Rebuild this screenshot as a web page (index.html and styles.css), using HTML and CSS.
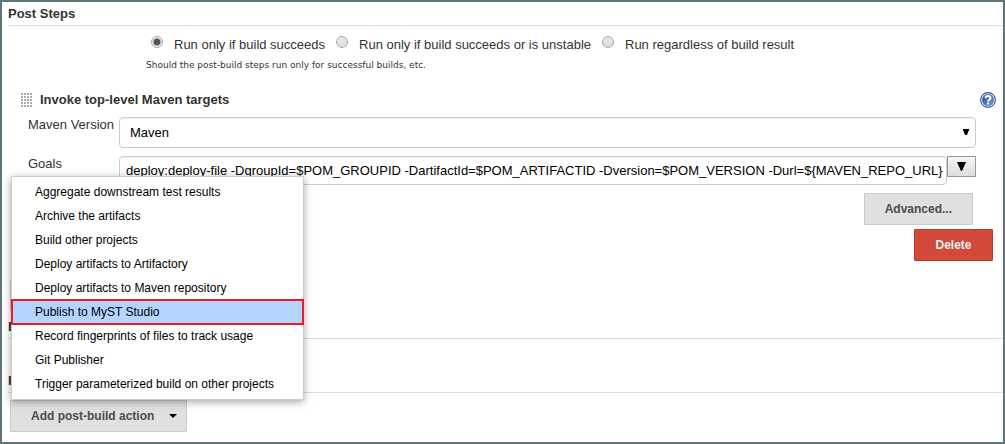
FILE: index.html
```html
<!DOCTYPE html>
<html lang="en">
<head>
<meta charset="utf-8">
<title>Job configuration</title>
<link rel="stylesheet" href="styles.css">
</head>
<body>
<form class="config">
  <h2 class="section-title">Post Steps</h2>
  <fieldset class="run-when">
    <label class="choice"><input type="radio" name="run" checked><span>Run only if build succeeds</span></label>
    <label class="choice"><input type="radio" name="run"><span>Run only if build succeeds or is unstable</span></label>
    <label class="choice"><input type="radio" name="run"><span>Run regardless of build result</span></label>
  </fieldset>
  <p class="hint">Should the post-build steps run only for successful builds, etc.</p>

  <div class="step">
    <div class="step-head">
      <span class="grip"></span>
      <h3 class="step-title">Invoke top-level Maven targets</h3>
      <a class="help" href="#help" aria-label="Help">
        <svg viewBox="0 0 16 16" width="16" height="16">
          <defs><linearGradient id="blue" x1="0" y1="0" x2="1" y2="1"><stop offset="0" stop-color="#1f4791"/><stop offset="1" stop-color="#7fa3d2"/></linearGradient></defs>
          <circle cx="8" cy="8" r="7.4" fill="#fff" stroke="#2f5593" stroke-width="1.1"/>
          <circle cx="8" cy="8" r="5.7" fill="url(#blue)" stroke="#3a609f" stroke-width=".6"/>
          <path d="M5.5 6.2C5.7 3.4 10.5 3.4 10.5 6.1C10.5 7.7 8.1 7.7 8.1 9.6" fill="none" stroke="#fff" stroke-width="2"/>
          <rect x="7" y="10.5" width="2.1" height="1.9" fill="#fff"/>
        </svg>
      </a>
    </div>
    <div class="field">
      <label class="field-label" for="version">Maven Version</label>
      <div class="select-box">
        <select class="select" id="version"><option>Maven</option></select>
        <svg class="select-arrow" viewBox="0 0 6 6" width="6" height="6"><path d="M0 0H6V1L4 6H2L0 1Z"/></svg>
      </div>
    </div>
    <div class="field">
      <label class="field-label" for="goals">Goals</label>
      <input class="text" id="goals" type="text" value="deploy:deploy-file -DgroupId=$POM_GROUPID -DartifactId=$POM_ARTIFACTID -Dversion=$POM_VERSION -Durl=${MAVEN_REPO_URL}">
      <button class="expand" type="button" aria-label="Expand"><svg viewBox="0 0 9 9" width="9" height="9"><path d="M0 0H9L5 9H4Z"/></svg></button>
    </div>
    <div class="actions">
      <button class="button advanced" type="button">Advanced...</button>
      <button class="button danger" type="button">Delete</button>
    </div>
  </div>

  <button class="button add add-step" type="button" aria-label="Add post-build step"><span class="caret"></span></button>
  <h2 class="section-title settings">Build Settings</h2>
  <h2 class="section-title post-actions">Post-build Actions</h2>
  <div class="dropdown">
    <button class="button add" type="button">Add post-build action<span class="caret"></span></button>
    <ul class="menu">
      <li><button class="item" type="button">Aggregate downstream test results</button></li>
      <li><button class="item" type="button">Archive the artifacts</button></li>
      <li><button class="item" type="button">Build other projects</button></li>
      <li><button class="item" type="button">Deploy artifacts to Artifactory</button></li>
      <li><button class="item" type="button">Deploy artifacts to Maven repository</button></li>
      <li><button class="item selected" type="button">Publish to MyST Studio</button></li>
      <li><button class="item" type="button">Record fingerprints of files to track usage</button></li>
      <li><button class="item" type="button">Git Publisher</button></li>
      <li><button class="item" type="button">Trigger parameterized build on other projects</button></li>
    </ul>
  </div>
</form>
</body>
</html>
```
FILE: styles.css
```css
* { box-sizing: border-box; }
body {
  margin: 0;
  background: #fff;
  color: #333;
  font: 13px/16px "Liberation Sans", Arial, sans-serif;
}
button, input, select { font: inherit; margin: 0; }
.config {
  min-height: 100vh;
  padding: 4px 0 10px 6px;
  border: 2px solid #60747c;
}
.section-title {
  margin: 0;
  padding-bottom: 3px;
  border-bottom: 1px solid #ddd;
  font-size: 13px;
  line-height: 16px;
  font-weight: bold;
}
.run-when {
  display: flex;
  gap: 11px;
  margin: 0;
  padding: 10px 0 0 143px;
  border: 0;
}
.choice { display: flex; gap: 11px; line-height: 18px; }
.choice input {
  appearance: none;
  width: 12px;
  height: 12px;
  flex: none;
  border: 1px solid #aaa;
  border-radius: 50%;
  background: linear-gradient(#e8e8e8, #dcdcdc);
}
.choice input:checked {
  background: radial-gradient(circle, #555 0 3px, #e8e8e8 4px);
}
.hint {
  margin: 5px 0 0 138px;
  font-family: "DejaVu Sans", Verdana, sans-serif;
  font-size: 9px;
  line-height: 12px;
}
.step { padding: 20px 7px 0 13px; }
.step-head { display: flex; align-items: center; height: 18px; }
.grip {
  width: 12px;
  height: 15px;
  background: radial-gradient(circle at 1px 1px, #aaa 1px, transparent 1px) 0 0 / 3px 3px;
}
.step-title { flex: 1; margin: 0 0 0 7px; font-size: 13px; line-height: 16px; }
.help { width: 16px; height: 16px; }
.help svg { display: block; }
.field {
  display: flex;
  align-items: flex-start;
  padding: 0 20px 0 7px;
  margin-top: 8px;
}
.field-label { flex: none; width: 91px; }
.select-box { position: relative; flex: 1; }
.select, .text {
  width: 100%;
  border: 1px solid #ccc;
  border-radius: 4px;
  background: #fff;
  box-shadow: inset 0 1px 1px #eee;
  color: #000;
}
.select { appearance: none; display: block; height: 31px; padding: 0 10px; }
.select-arrow { position: absolute; right: 7px; top: 12px; }
.text { flex: 1; min-width: 0; height: 29px; padding: 0 3px 0 6px; }
.expand {
  display: flex;
  justify-content: center;
  width: 29px;
  height: 21px;
  padding: 5px 0 0;
  border: 1px solid #999;
  background: linear-gradient(#f5f5f5, #ddd);
}
.actions { display: flex; flex-direction: column; align-items: flex-end; gap: 4px; padding-top: 8px; }
.button {
  height: 32px;
  padding: 0 20px;
  border: 1px solid #ccc;
  border-radius: 1px;
  background: #e0e0e0;
  color: #4d4d4d;
  font-size: 12px;
  font-weight: bold;
}
.advanced { margin-right: 23px; }
.danger { min-width: 79px; margin-right: 3px; background: #d24939; border-color: #b83a2b; color: #eee; }
.add { display: flex; align-items: center; margin: 18px 0 0 2px; padding-right: 9px; }
.add-step { justify-content: flex-end; width: 177px; }
.caret {
  margin-left: 15px;
  border: 4px solid transparent;
  border-top-color: #000;
  border-bottom: 0;
}
.settings { margin-top: 8px; }
.post-actions { margin-top: 34px; }
.dropdown { position: relative; width: max-content; }
.dropdown .add { margin-top: 7px; }
.menu {
  position: absolute;
  left: 3px;
  bottom: 32px;
  width: 293px;
  margin: 0;
  padding: 3px 0;
  list-style: none;
  border: 1px solid #ccc;
  background: #fff;
  box-shadow: 0 2px 8px rgba(0, 0, 0, .35);
}
.item {
  display: block;
  width: 100%;
  height: 24px;
  padding: 0 23px;
  border: 0;
  background: none;
  color: #000;
  font-size: 12px;
  text-align: left;
}
.selected { background: #b3d4ff; outline: 2px solid #ed1c24; outline-offset: -1px; }
```
